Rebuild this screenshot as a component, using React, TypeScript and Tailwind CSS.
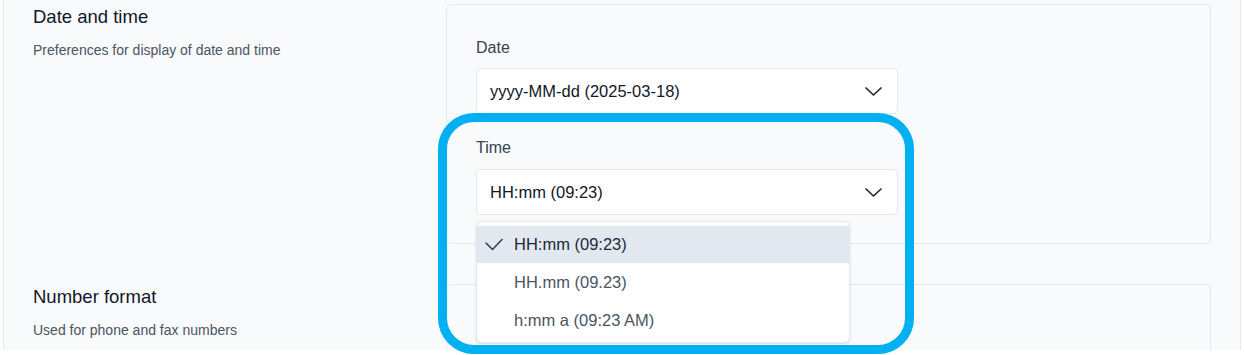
import React from 'react';

const timeOptions = ['HH:mm (09:23)', 'HH.mm (09.23)', 'h:mm a (09:23 AM)'];

const Chevron = () => (
  <svg width="17" height="9" viewBox="0 0 17 9" fill="none">
    <path d="M1 1 L8.5 8 L16 1" stroke="#1f2937" strokeWidth="1.7" strokeLinecap="round" strokeLinejoin="round" />
  </svg>
);

const Check = () => (
  <svg width="18" height="13" viewBox="0 0 18 13" fill="none">
    <path d="M1 5 L7.5 11.5 L17 1.5" stroke="#374151" strokeWidth="1.6" strokeLinecap="round" strokeLinejoin="round" />
  </svg>
);

const Select = ({ value }: { value: string }) => (
  <div className="flex h-[46px] w-[422px] items-center justify-between rounded-[5px] border border-[#e2e8f0] bg-white pl-[13px] pr-[15px]">
    <span className="text-[16.5px] text-[#111827]">{value}</span>
    <Chevron />
  </div>
);

const SectionText = ({ title, subtitle }: { title: string; subtitle: string }) => (
  <div className="w-[442px] shrink-0 pl-[29px] pt-[1px]">
    <h2 className="text-[18.5px] leading-[24px] text-[#111827]">{title}</h2>
    <p className="mt-[11px] text-[14px] leading-[20px] text-[#4b5563]">{subtitle}</p>
  </div>
);

export default function App() {
  return (
    <div className="relative h-[355px] w-[1244px] overflow-hidden bg-white font-['Liberation_Sans',Arial,sans-serif]">
      <div className="mx-[3px] flex h-[350px] flex-col gap-[40px] overflow-hidden border-x border-[#e5e9f0] bg-[#f8fafc] pt-[4px]">
        {/* Date and time */}
        <section className="flex">
          <SectionText title="Date and time" subtitle="Preferences for display of date and time" />
          <div className="h-[240px] w-[765px] rounded-md border border-[#e2e8f0] bg-[#f8fafc] pl-[29px] pt-[33px]">
            <label className="block text-[16px] leading-[20px] text-[#374151]">Date</label>
            <div className="mt-[10px]">
              <Select value="yyyy-MM-dd (2025-03-18)" />
            </div>
            <label className="mt-[24px] block text-[16px] leading-[20px] text-[#374151]">Time</label>
            <div className="relative mt-[11px] w-[422px]">
              <Select value="HH:mm (09:23)" />
              {/* open listbox */}
              <div className="absolute left-0 top-[52px] z-10 h-[122px] w-[374px] rounded-[5px] border border-[#e2e8f0] bg-white pt-[4px] shadow-sm">
                {timeOptions.map((opt, i) => (
                  <div
                    key={opt}
                    className={
                      i === 0
                        ? 'flex h-[37px] items-center bg-[#e2e8f0] text-[16.5px] text-[#1f2937]'
                        : 'flex h-[38px] items-center text-[16.5px] text-[#4b5563]'
                    }
                  >
                    <span className="flex w-[37px] pl-[8px]">{i === 0 && <Check />}</span>
                    <span>{opt}</span>
                  </div>
                ))}
              </div>
            </div>
          </div>
        </section>

        {/* Number format */}
        <section className="flex">
          <SectionText title="Number format" subtitle="Used for phone and fax numbers" />
          <div className="h-[160px] w-[765px] rounded-md border border-[#e2e8f0] bg-[#f8fafc]" />
        </section>
      </div>

      {/* highlight annotation */}
      <div className="pointer-events-none absolute left-[438px] top-[113px] z-20 h-[241px] w-[476px] rounded-[36px] border-[9px] border-[#00b0f0]" />
    </div>
  );
}
